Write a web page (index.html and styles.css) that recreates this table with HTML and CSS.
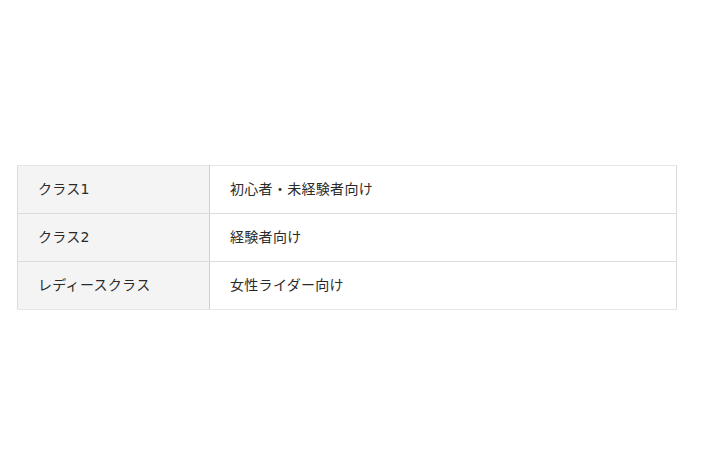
FILE: index.html
```html
<!DOCTYPE html>
<html lang="ja">
<head>
<meta charset="utf-8">
<link rel="stylesheet" href="styles.css">
</head>
<body>
<div class="page">
  <table class="spec">
    <tbody>
      <tr><th>クラス1</th><td>初心者・未経験者向け</td></tr>
      <tr><th>クラス2</th><td>経験者向け</td></tr>
      <tr><th>レディースクラス</th><td>女性ライダー向け</td></tr>
    </tbody>
  </table>
</div>
</body>
</html>
```
FILE: styles.css
```css
html, body {
  margin: 0;
  padding: 0;
  background: #fff;
}
.page {
  height: 474px;
  display: flex;
  align-items: center;
  padding-left: 17px;
  box-sizing: border-box;
}
.spec {
  width: 660px;
  border-collapse: collapse;
  font-family: "DejaVu Sans", "Noto Sans CJK JP", sans-serif;
  font-size: 14px;
  letter-spacing: 0.3px;
  color: #2a2a2a;
}
.spec th,
.spec td {
  height: 48px;
  padding: 0 20px 2px;
  text-align: left;
  font-weight: normal;
  border: 1px solid #dcdcdc;
  box-sizing: border-box;
}
.spec th {
  width: 192px;
  background: #f4f4f4;
  border-right-color: #cfcfcf;
}
.spec tr:first-child th,
.spec tr:first-child td {
  border-top-color: #e6e6e6;
}
.spec tr:last-child th,
.spec tr:last-child td {
  border-bottom-color: #e6e6e6;
}
```
